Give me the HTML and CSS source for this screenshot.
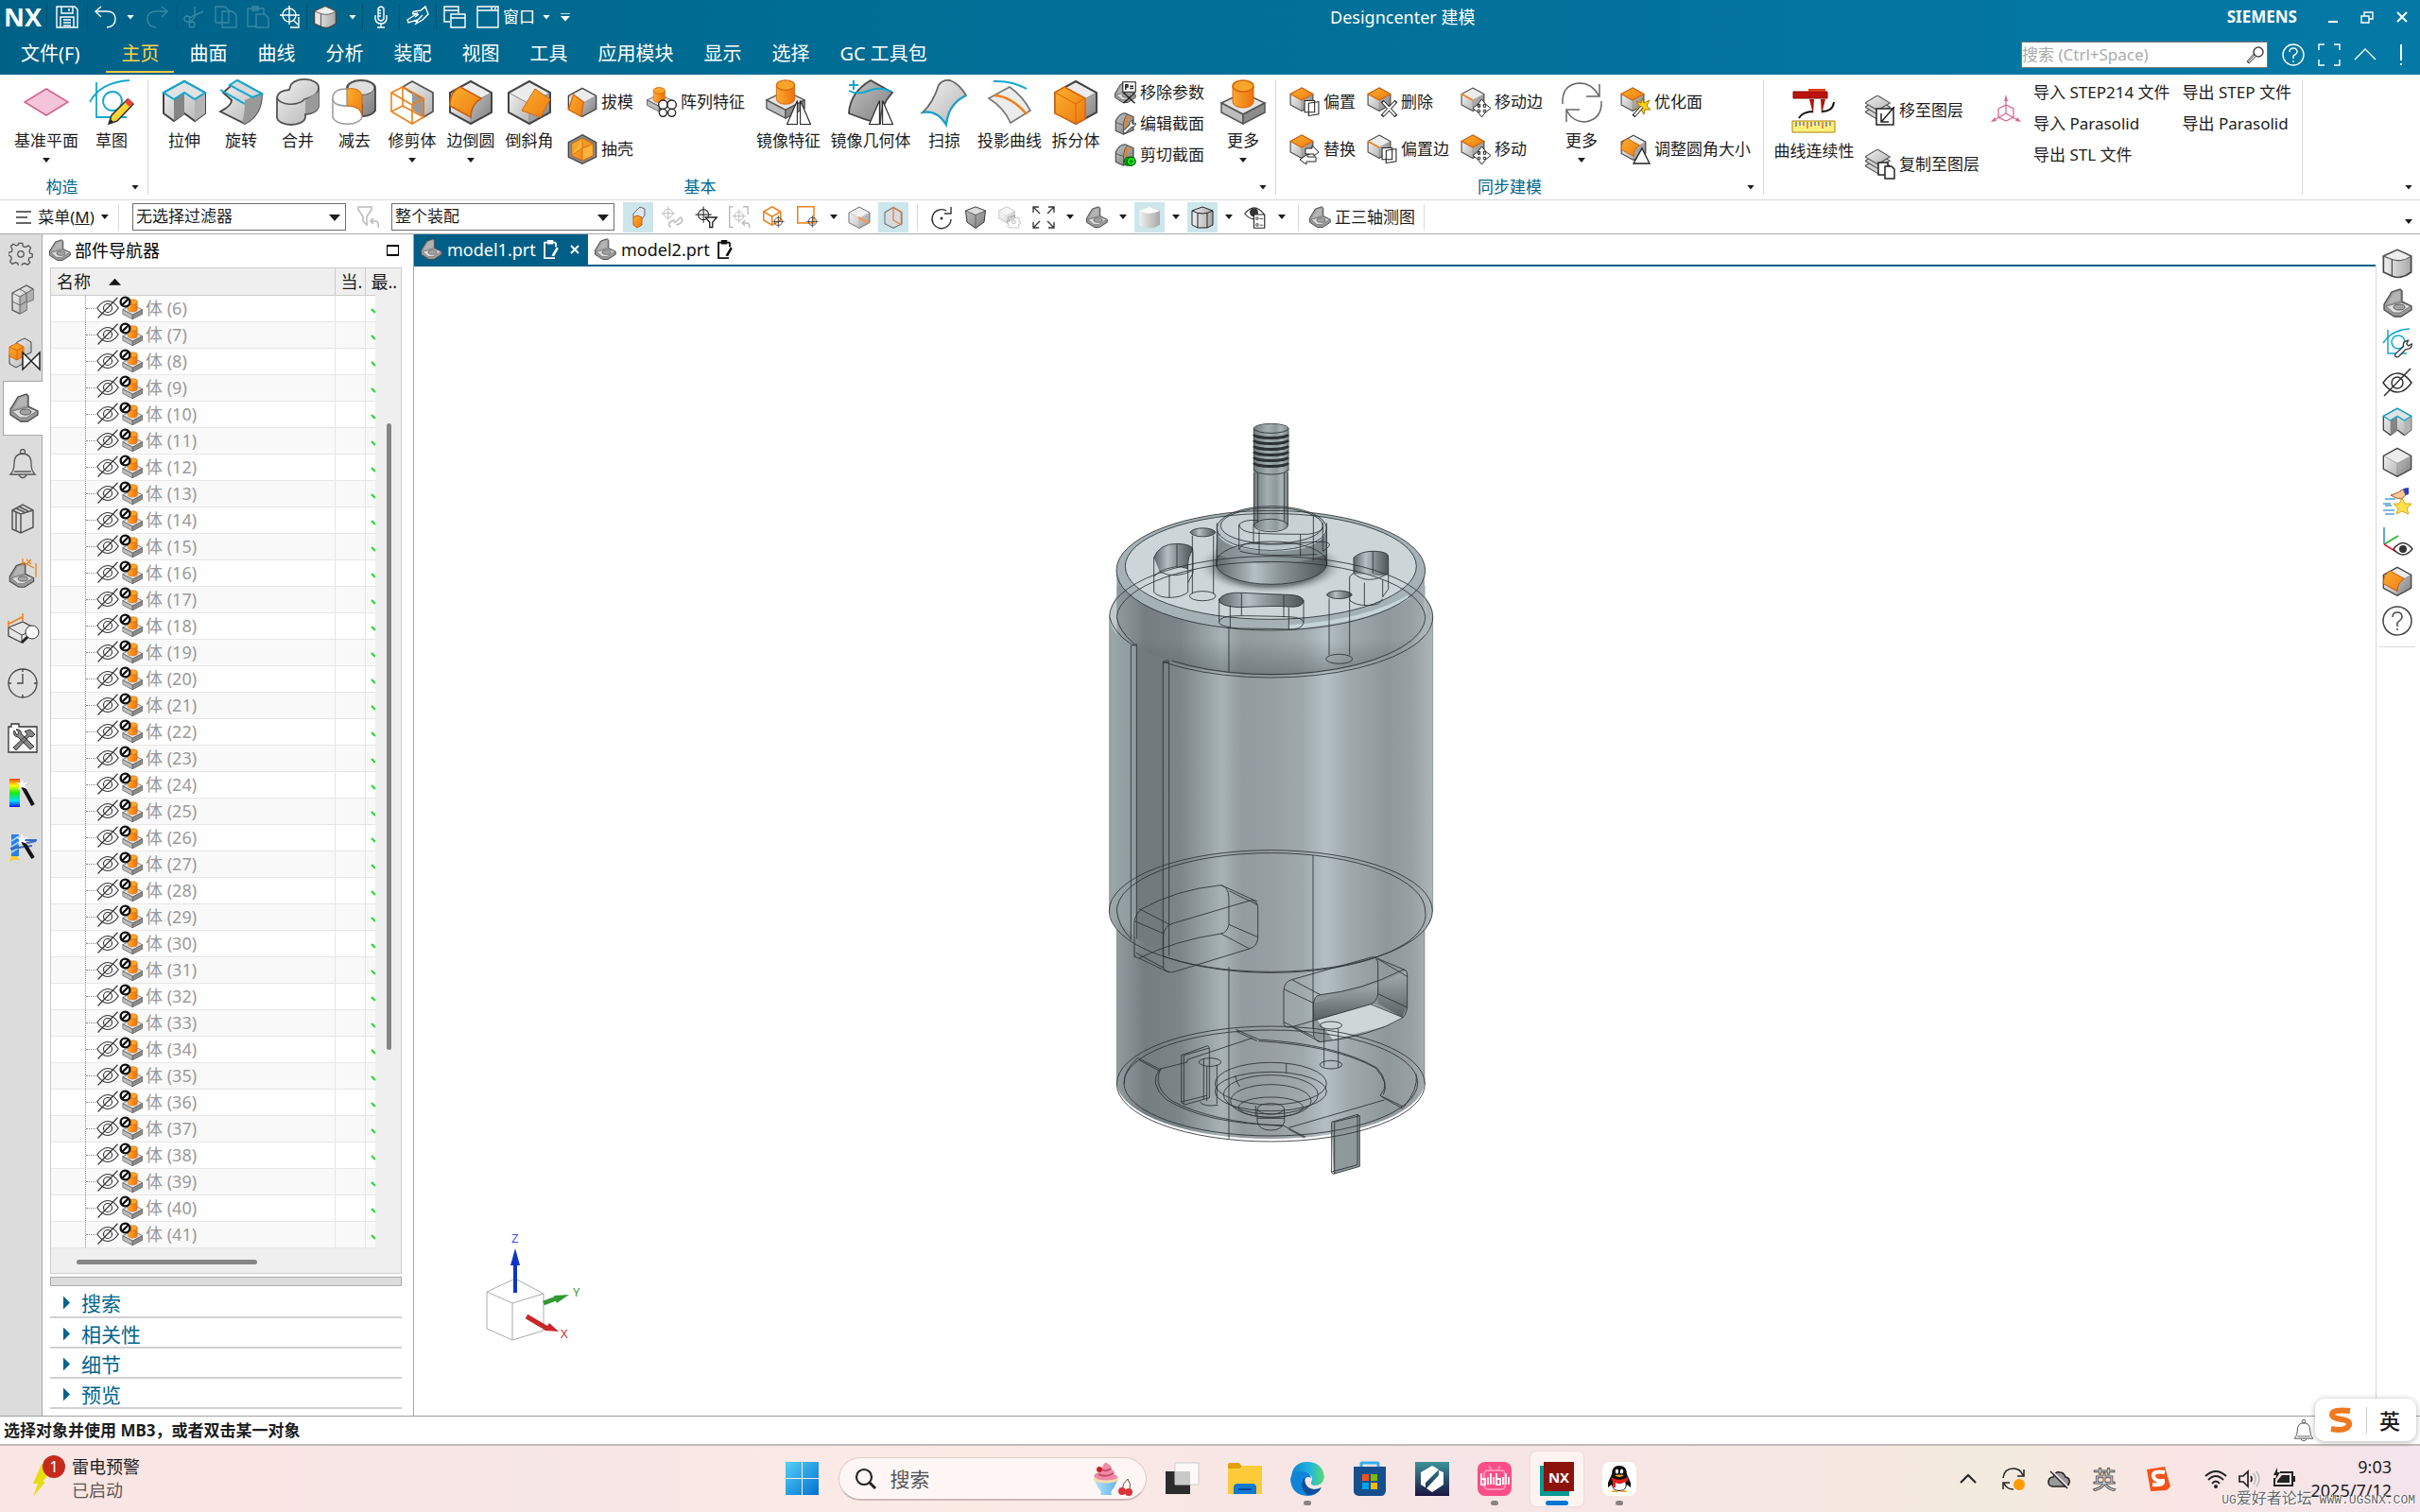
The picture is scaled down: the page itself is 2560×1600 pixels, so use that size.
FILE: index.html
```html
<!DOCTYPE html>
<html lang="zh-CN">
<head>
<meta charset="utf-8">
<meta name="viewport" content="width=device-width, initial-scale=1">
<title>Designcenter 建模</title>
<link rel="stylesheet" href="styles.css">
<script src="app.js" defer></script>
</head>
<body>
<svg class="defs" aria-hidden="true">
<defs>
<linearGradient id="gg" x1="0" y1="0" x2="1" y2="1"><stop offset="0" stop-color="#f2f2f2"/><stop offset="1" stop-color="#b4b4b4"/></linearGradient>
<linearGradient id="gd" x1="0" y1="0" x2="1" y2="1"><stop offset="0" stop-color="#c2c2c2"/><stop offset="1" stop-color="#7d7d7d"/></linearGradient>
<linearGradient id="go" x1="0" y1="0" x2="1" y2="1"><stop offset="0" stop-color="#fbb02e"/><stop offset="1" stop-color="#ee7a10"/></linearGradient>
<linearGradient id="gcyl"><stop offset="0" stop-color="#f0f0f0"/><stop offset="1" stop-color="#a8a8a8"/></linearGradient>
<linearGradient id="gocyl"><stop offset="0" stop-color="#fba832"/><stop offset="1" stop-color="#ec720c"/></linearGradient>
<linearGradient id="rainbow" x2="0" y2="1"><stop offset="0" stop-color="#f40"/><stop offset=".25" stop-color="#ff0"/><stop offset=".5" stop-color="#1e1"/><stop offset=".78" stop-color="#0df"/><stop offset="1" stop-color="#11f"/></linearGradient>
<linearGradient id="win" x2="1" y2="1"><stop offset="0" stop-color="#55d0f8"/><stop offset="1" stop-color="#0070d0"/></linearGradient>
<linearGradient id="edge" x2="1" y2="0"><stop offset="0" stop-color="#0a84d6"/><stop offset=".6" stop-color="#25b8d8"/><stop offset="1" stop-color="#5fdc6a"/></linearGradient>
<linearGradient id="pen" x2="0" y2="1"><stop offset="0" stop-color="#3b9399"/><stop offset="1" stop-color="#1b1442"/></linearGradient>
<linearGradient id="cup" x2="1" y2="0"><stop offset="0" stop-color="#b8e0f8"/><stop offset="1" stop-color="#5cb4ee"/></linearGradient>
</defs>
<symbol id="cube" viewBox="0 0 48 48"><path d="M24 2 46 14 24 26 2 14Z" fill="#ececec"/><path d="M2 14 24 26V47L2 35Z" fill="url(#gg)"/><path d="M46 14 24 26V47L46 35Z" fill="url(#gd)"/><path d="M2 14 24 26 46 14M24 26V47" fill="none" stroke="#8a8a8a"/><path d="M24 2 46 14V35L24 47 2 35V14Z" fill="none" stroke="#444" stroke-width="2"/></symbol>
<symbol id="ocube" viewBox="0 0 48 48"><use href="#cube"/><path d="M24 2 46 14 24 26 2 14Z" fill="url(#go)" stroke="#d9660a" stroke-width="2"/></symbol>
<symbol id="ecube" viewBox="0 0 48 48"><use href="#cube"/><path d="M2 14 24 26" stroke="#f08018" stroke-width="3"/></symbol>
<symbol id="feature" viewBox="0 0 48 48"><path d="M1 25 24 14 47 25 24 37Z" fill="#e4e4e4" stroke="#555" stroke-width="1.5"/><path d="M1 25 24 37V47L1 35Z" fill="#bdbdbd" stroke="#555" stroke-width="1.5"/><path d="M47 25 24 37V47L47 35Z" fill="#8c8c8c" stroke="#555" stroke-width="1.5"/><path d="M13 7V24A11 6 0 0 0 35 24V7Z" fill="url(#gocyl)" stroke="#d9660a"/><ellipse cx="24" cy="7" rx="11" ry="6" fill="#f9a52c" stroke="#d9660a" stroke-width="1.5"/></symbol>
<symbol id="bracket" viewBox="0 0 32 32"><path d="M2 23V17L10 4 19 1 21 3V14L31 19V23L20 30H13Z" fill="#9a9a9a" stroke="#4a4a4a" stroke-width="1.3"/><path d="M5 17 12 5 19 3V13Z" fill="#b4b4b4"/><path d="M4 19 20 15 30 19 19 26H12Z" fill="#dedede" stroke="#777"/><ellipse cx="18" cy="20" rx="6" ry="3" fill="#a4a4a4" stroke="#555"/></symbol>
<symbol id="eyeoff" viewBox="0 0 32 32"><g fill="none" stroke="#333" stroke-width="1.500"><path d="M1 16Q8 6 16 6T31 16Q24 26 16 26T1 16Z"/><circle cx="16" cy="16" r="6"/><path d="M2 30 30 1"/></g></symbol>
<symbol id="gear" viewBox="0 0 32 32"><path d="M13 3h5l1 4 3 1 4-2 3 3-2 4 1 3 3 1v4l-4 1-1 3 2 3-3 3-4-2-3 1-1 3h-4l-1-4-3-1-4 2-3-3 2-4-1-3-3-1v-4l4-1 1-3-2-4 3-3 4 2 3-1Z" fill="none" stroke="#555" stroke-width="1.600"/><circle cx="16" cy="17" r="4" fill="none" stroke="#555" stroke-width="1.600"/></symbol>
<symbol id="bell" viewBox="0 0 32 32"><g fill="none" stroke="#555" stroke-width="1.300"><path d="M3 27Q7 23 7 16Q7 5 16 5T25 16Q25 23 29 27ZM7 24H25M12 28Q16 33 20 28"/><circle cx="16" cy="3" r="2.500"/></g></symbol>
<symbol id="extrude" viewBox="0 0 48 48"><path d="M2 14V36L13 44 24 36 35 44 46 36V14L24 2Z" fill="url(#gg)" stroke="#444" stroke-width="2"/><path d="M13 21 24 14V37L13 44Z" fill="#858585"/><path d="M35 21 46 14V36L35 44Z" fill="#b4b4b4"/><path d="M2 14 24 2 46 14 35 21 24 14 13 21Z" fill="#e2e2e2" stroke="#12a8d0" stroke-width="2"/></symbol>
<symbol id="blend" viewBox="0 0 48 48"><use href="#cube"/><path d="M13 8Q3 12 2 25V28L24 40Q24 27 35 20Z" fill="url(#go)" stroke="#c85c0a" stroke-width="1.500"/></symbol>
<symbol id="target" viewBox="0 0 32 32"><g fill="none" stroke="currentColor" stroke-width="1.800"><circle cx="15" cy="15" r="9"/><path d="M15 1V29M1 15H29"/></g></symbol>
<symbol id="wrench" viewBox="0 0 32 32"><path d="M3 25 17 12Q15 5 21 3L25 2 22 8 25 11 31 8Q31 17 21 17L8 30Q1 31 3 25Z" fill="#fff" stroke="#333" stroke-width="2"/></symbol>
<symbol id="move" viewBox="0 0 32 32"><path d="M16 0 23 9H19V14H23V9L32 16 23 23V19H19V23H23L16 32 9 23H13V19H9V23L0 16 9 9V14H13V9H9Z" fill="#fff" stroke="#222" stroke-width="1.600"/></symbol>
<symbol id="sheets" viewBox="0 0 32 32"><path d="M2 1H22V24H2ZM10 6 30 3V28L10 31Z" fill="#fff" stroke="#222" stroke-width="2"/></symbol>
<symbol id="tris" viewBox="0 0 48 48"><path d="M21 1V47H1ZM27 1V47H47Z" fill="#fff" stroke="#222" stroke-width="2"/></symbol>
<symbol id="clip" viewBox="0 0 18 24"><path d="M15 4H2V22H14M15 4V9" fill="none" stroke="currentColor" stroke-width="2"/><path d="M5 1H12V6H5ZM10 19 16 9 18 11 13 20Z" fill="currentColor"/></symbol>
<symbol id="layers" viewBox="0 0 32 32"><g stroke="#555" stroke-width="1.300" fill="#d2d2d2"><path d="M0 20 15 11 30 20 15 29Z"/><path d="M0 14 15 5 30 14 15 23Z"/><path d="M0 9 15 0 30 9 15 18Z" fill="url(#gg)"/></g></symbol>
<symbol id="solid" viewBox="0 0 32 32"><path d="M3 9 16 3 29 9V24Q20 31 12 28L3 24Z" fill="url(#gcyl)" stroke="#444" stroke-width="1.500"/><path d="M3 9 16 3 29 9Q20 15 11 12Z" fill="#eee" stroke="#555"/><path d="M11 12V28" stroke="#444"/></symbol>
<symbol id="section" viewBox="0 0 32 32"><path d="M3 12Q8 1 16 1L28 6V25L14 31 3 26Z" fill="url(#gd)" stroke="#444" stroke-width="1.500"/><path d="M3 14 14 18V31M14 18Q15 5 20 3" fill="none" stroke="#444"/><path d="M20 5Q15 8 16 28L20 26V12Q20 8 25 6Z" fill="#f08018"/></symbol>
</svg>

<header class="app-header">
<div class="titlebar">
<div class="quick">
<span class="nx">NX</span><i class="sep"></i>
<button class="c42" aria-label="保存"><svg class="i24" viewBox="0 0 24 24"><path d="M1 1H20L23 4V23H1ZM6 1V8H18V1M14 3V6M5 23V12H19V23M8 15H16M8 18H16M8 21H16" class="wl"/></svg></button><i class="sep"></i>
<button class="c38" aria-label="撤消"><svg class="i24" viewBox="0 0 24 24"><path d="M7 1 1 6 7 12M1 6H13Q22 6 22 14T13 23" class="wl"/></svg></button><button class="c14" aria-label="撤消列表"><b class="caret"></b></button>
<button class="c42 dim" aria-label="重做"><svg class="i24" viewBox="0 0 24 24"><path d="M17 1 23 6 17 12M23 6H11Q2 6 2 14T11 23" class="wl"/></svg></button><i class="sep"></i>
<button class="c34 dim" aria-label="剪切"><svg class="i24" viewBox="0 0 24 24"><path d="M13 1V12L7 19M22 6 7 13" class="wl"/><circle cx="5" cy="14" r="3" class="wl"/><circle cx="10" cy="20" r="3" class="wl"/></svg></button>
<button class="c34 dim" aria-label="复制"><svg class="i24" viewBox="0 0 24 24"><path d="M1 1H11L15 5V18H1ZM8 6H19L23 10V23H8Z" class="wl"/></svg></button>
<button class="c34 dim" aria-label="粘贴"><svg class="i24" viewBox="0 0 24 24"><path d="M10 22H1V3H18V9M6 1H12V5H6ZM10 9H19L23 13V23H10Z" class="wl"/></svg></button>
<button class="c34" aria-label="命令查找器"><svg class="i24" viewBox="0 0 24 24"><path d="M11 0V20M1 10H22M21 12V23H12M15 15 20 20" class="wl"/><circle cx="11" cy="10" r="7" class="wl"/></svg></button><i class="sep"></i>
<button class="c38" aria-label="实体"><svg class="i28"><use href="#solid"/></svg></button><button class="c20" aria-label="实体列表"><b class="caret"></b></button><i class="sep"></i>
<button class="c38" aria-label="语音"><svg class="i24" viewBox="0 0 24 24"><path d="M9 3Q12-1 15 3V14Q12 18 9 14ZM9 5H12M9 8H12M9 11H12M6 10V14Q7 19 12 19T18 14V10M12 19V23M8 23H16" class="wl"/></svg></button><i class="sep"></i>
<button class="c38" aria-label="触控"><svg class="i24" viewBox="0 0 24 24"><path d="M1 15 12 8 7 9Q6 6 9 6L15 5 20 1 23 9 17 15 10 19 12 15 2 18ZM12 15 17 10M9 12 13 9" class="wl"/></svg></button><i class="sep"></i>
<button class="c38" aria-label="切换窗口"><svg class="i24" viewBox="0 0 24 24"><path d="M7 17H1V1H16V8M1 5H16M8 9H23V23H8ZM8 13H23" class="wl"/></svg></button>
<button class="winbtn"><svg class="i24" viewBox="0 0 24 24"><path d="M1 1H23V23H1ZM1 5H23M15 3H17M19 3H21" class="wl"/></svg>窗口<b class="caret"></b></button>
<button class="c24 over" aria-label="自定义"><b class="caret"></b></button>
</div>
<h1>Designcenter 建模</h1>
<div class="wintools"><strong>SIEMENS</strong>
<button aria-label="最小化"><svg class="i14" viewBox="0 0 14 14"><path d="M2 12H12" class="wl2"/></svg></button>
<button aria-label="还原"><svg class="i14" viewBox="0 0 14 14"><path d="M1 6H9V13H1ZM4 6V2H13V9H9" class="wl"/></svg></button>
<button aria-label="关闭"><svg class="i14" viewBox="0 0 14 14"><path d="M2 2 12 12M12 2 2 12" class="wl2"/></svg></button></div>
</div>
<nav class="menubar">
<a class="file" href="#file">文件(F)</a><a class="on" href="#home">主页</a><a href="#surface">曲面</a><a href="#curve">曲线</a><a href="#analysis">分析</a><a href="#assembly">装配</a><a href="#view">视图</a><a href="#tools">工具</a><a href="#apps">应用模块</a><a href="#display">显示</a><a href="#select">选择</a><a href="#gc">GC 工具包</a>
<div class="menuright">
<div class="findbox"><input type="search" placeholder="搜索 (Ctrl+Space)" aria-label="搜索"><svg class="i20" viewBox="0 0 20 20"><circle cx="13" cy="7" r="5" fill="none" stroke="#444" stroke-width="1.500"/><path d="M9 10 2 18M8 9 1 17 3 19 10 12" fill="none" stroke="#444"/></svg></div>
<button aria-label="帮助"><svg class="i24" viewBox="0 0 24 24"><circle cx="12" cy="12" r="11" class="wl"/><path d="M8 9Q8 5 12 5T16 9Q16 11 12 13V16M12 18V20" class="wl"/></svg></button>
<button aria-label="全屏"><svg class="i24" viewBox="0 0 24 24"><path d="M1 7V1H7M17 1H23V7M23 17V23H17M7 23H1V17" class="wl"/></svg></button>
<button aria-label="最小化功能区"><svg class="i24" viewBox="0 0 24 24"><path d="M1 17 12 6 23 17" class="wl"/></svg></button>
<button aria-label="通知"><svg class="i24" viewBox="0 0 24 24"><path d="M12 1V18M12 21V23" class="wl2"/></svg></button>
</div>
</nav>
</header>

<section class="ribbon">
<div class="group g1">
<div class="tools">
<button class="big w4"><svg class="i48" viewBox="0 0 48 48"><path d="M24 10 47 24 24 38 1 24Z" fill="#f4c4da" stroke="#d2628f" stroke-width="1.500"/></svg>基准平面<b class="caret"></b></button>
<button class="big w2"><svg class="i48" viewBox="0 0 48 48"><g fill="none" stroke="#12a8d0" stroke-width="1.800"><path d="M8 3V40H40M1 24Q12 3 43 1"/><circle cx="25" cy="23" r="10"/></g><path d="M21 47 24 38 41 21 47 26 30 44Z" fill="#fcd535" stroke="#333" stroke-width="1.500"/><path d="M38 24 42 20 47 25 43 29Z" fill="#e8453c"/><path d="M21 47 23 42 26 45Z" fill="#222"/></svg>草图</button>
</div>
<div class="gfoot"><span>构造</span><button aria-label="构造选项"><b class="caret"></b></button></div>
</div>
<div class="group g2">
<div class="tools">
<button class="big w2"><svg class="i48"><use href="#extrude"/></svg>拉伸</button>
<button class="big w2"><svg class="i48" viewBox="0 0 48 48"><path d="M20 1 46 15Q46 38 28 47L2 34Q14 28 14 22L5 14Z" fill="url(#gg)" stroke="#444" stroke-width="1.800"/><path d="M28 22Q28 38 25 45L28 47Q46 38 46 15L37 18Z" fill="#999"/><path d="M20 1 46 15 36 19 12 6ZM2 11 28 26" fill="#dadada" stroke="#12a8d0" stroke-width="2"/></svg>旋转</button>
<button class="big w2"><svg class="i48" viewBox="0 0 48 48"><path d="M16 8A14 8 0 0 1 46 9V29Q44 36 32 37V40A15 8 0 0 1 2 40V19Q3 12 15 11Z" fill="url(#gg)" stroke="#555" stroke-width="1.800"/><path d="M2 19A15 8 0 0 0 31 21Q46 17 46 9" fill="none" stroke="#555" stroke-width="1.500"/><path d="M32 22V36Q44 36 46 29V13Z" fill="#9a9a9a"/></svg>合并</button>
<button class="big w2"><svg class="i48" viewBox="0 0 48 48"><path d="M16 9A15 8 0 0 1 46 9V33Q42 39 32 39V27L16 20Z" fill="url(#gd)" stroke="#444" stroke-width="1.800"/><ellipse cx="31" cy="9" rx="14" ry="7.500" fill="#dedede" stroke="#555"/><path d="M1 19V39A15 8 0 0 0 32 39Q31 28 16 28Q2 27 1 19Z" fill="#fff" stroke="#999" stroke-width="1.500"/><path d="M16 10Q28 8 32 16V38Q31 28 16 28Z" fill="url(#go)" stroke="#d9660a"/><path d="M16 10Q2 10 1 19T16 28Z" fill="#fff" stroke="#999" stroke-width="1.500"/></svg>减去</button>
<button class="big w3"><svg class="i48" viewBox="0 0 48 48"><path d="M24 2 46 14V34L36 40V22L14 8Z" fill="url(#gg)" stroke="#555" stroke-width="1.800"/><path d="M24 14 36 22V40L24 32Z" fill="#999"/><path d="M2 14 14 8 36 20 24 27ZM2 14V34L24 47V27M14 8V28L2 34M14 28 36 40 24 47M36 20V40" fill="none" stroke="#f08018" stroke-width="1.600"/></svg>修剪体<b class="caret"></b></button>
<button class="big w3"><svg class="i48"><use href="#blend"/></svg>边倒圆<b class="caret"></b></button>
<button class="big w3"><svg class="i48" viewBox="0 0 48 48"><use href="#cube"/><path d="M30 10 46 21 36 40 16 33Z" fill="url(#go)" stroke="#d9660a"/></svg>倒斜角</button>
<div class="pair">
<button class="small"><svg class="i32" viewBox="0 0 48 48"><use href="#cube"/><path d="M10 12 26 24 22 47 2 36Z" fill="url(#go)" stroke="#d9660a" stroke-width="2"/></svg>拔模</button>
<button class="small"><svg class="i32" viewBox="0 0 48 48"><path d="M24 1 46 13V36L24 47 2 36V13Z" fill="#888" stroke="#444" stroke-width="2"/><path d="M24 6 41 15V34L24 42 7 34V15Z" fill="url(#go)" stroke="#b4500a"/><path d="M24 6V22L7 34M24 22Q34 20 41 15V34L24 42Z" fill="#ffb33a" stroke="#c85c0a"/></svg>抽壳</button>
</div>
<div class="pair">
<button class="small"><svg class="i32" viewBox="0 0 48 48"><use href="#feature" width="40" height="40"/><g fill="#fff" stroke="#222" stroke-width="2"><circle cx="26" cy="28" r="7"/><circle cx="40" cy="28" r="7"/><circle cx="26" cy="41" r="6"/><circle cx="40" cy="41" r="6"/></g></svg>阵列特征</button>
</div>
<button class="big w4"><svg class="i48" viewBox="0 0 48 48"><use href="#feature" width="42" height="42"/><use href="#tris" x="22" y="22" width="26" height="26"/></svg>镜像特征</button>
<button class="big w5"><svg class="i48" viewBox="0 0 48 48"><path d="M24 1 47 14Q34 28 34 47Q18 43 1 36Q2 14 24 1Z" fill="url(#gd)" stroke="#444" stroke-width="1.800"/><path d="M6 1V11M1 6H11M1 12Q10 17 22 12T46 13" fill="none" stroke="#12a8d0" stroke-width="2"/><use href="#tris" x="22" y="22" width="26" height="26"/></svg>镜像几何体</button>
<button class="big w2"><svg class="i48" viewBox="0 0 48 48"><path d="M1 35Q12 25 18 6Q22 0 30 1Q40 5 47 17Q28 26 26 48Q16 32 1 35Z" fill="url(#gg)" stroke="#666" stroke-width="1.800"/><path d="M1 35Q16 32 26 48Q28 26 47 17" fill="none" stroke="#12a8d0" stroke-width="2"/></svg>扫掠</button>
<button class="big w4"><svg class="i48" viewBox="0 0 48 48"><path d="M24 8Q38 18 46 33L25 46Q18 30 2 20Z" fill="#ececec" stroke="#777" stroke-width="1.600"/><path d="M8 17Q26 18 42 37" fill="none" stroke="#f08018" stroke-width="2.500"/><path d="M7 2Q26 1 42 10" fill="none" stroke="#12a8d0" stroke-width="2"/></svg>投影曲线</button>
<button class="big w3"><svg class="i48" viewBox="0 0 48 48"><use href="#cube"/><path d="M12 8 34 20V42L24 47 2 36V14Z" fill="url(#go)" stroke="#d9660a" stroke-width="1.500"/><path d="M2 14 24 26 34 20M24 26V47" fill="none" stroke="#d9660a"/></svg>拆分体</button>
<div class="trio">
<button class="small"><svg class="i24" viewBox="0 0 32 32"><use href="#bracket"/><path d="M13 1H31V15H13Z" fill="#fff" stroke="#222" stroke-width="1.500"/><path d="M17 12V5H20V8H17M23 7H28M23 10H28M14 16 30 31M30 16 14 31" fill="none" stroke="#222" stroke-width="2"/></svg>移除参数</button>
<button class="small"><svg class="i24" viewBox="0 0 32 32"><use href="#section"/><use href="#wrench" x="12" y="10" width="20" height="20"/></svg>编辑截面</button>
<button class="small"><svg class="i24" viewBox="0 0 32 32"><use href="#section"/><path d="M18 19H26V31H18Q12 25 18 19Z" fill="#0a0" stroke="#040"/><circle cx="25" cy="25" r="6" fill="#12e21e" stroke="#040" stroke-width="1.500"/><circle cx="25" cy="25" r="2.500" fill="#088a10"/></svg>剪切截面</button>
</div>
<button class="big w2"><svg class="i48"><use href="#feature"/></svg>更多<b class="caret"></b></button>
</div>
<div class="gfoot"><span>基本</span><button aria-label="基本选项"><b class="caret"></b></button></div>
</div>
<div class="group g3">
<div class="tools">
<div class="pair">
<button class="small"><svg class="i32" viewBox="0 0 32 32"><use href="#ocube" width="26" height="26"/><use href="#sheets" x="15" y="13" width="17" height="19"/></svg>偏置</button>
<button class="small"><svg class="i32" viewBox="0 0 32 32"><use href="#ocube" width="26" height="26"/><path d="M17 15H24V12L31 19 26 23V21H17ZM28 24H19V21L11 27 18 32V29H28Z" fill="#fff" stroke="#222"/></svg>替换</button>
</div>
<div class="pair">
<button class="small"><svg class="i32" viewBox="0 0 32 32"><use href="#ocube" width="26" height="26"/><path d="M16 15 31 31M31 15 16 31" stroke="#222" stroke-width="4"/><path d="M17 16 30 30M30 16 17 30" stroke="#fff" stroke-width="2"/></svg>删除</button>
<button class="small"><svg class="i32" viewBox="0 0 32 32"><use href="#ecube" width="26" height="26"/><use href="#sheets" x="15" y="13" width="17" height="19"/></svg>偏置边</button>
</div>
<div class="pair">
<button class="small"><svg class="i32" viewBox="0 0 32 32"><use href="#ecube" width="26" height="26"/><use href="#move" x="13" y="13" width="19" height="19"/></svg>移动边</button>
<button class="small"><svg class="i32" viewBox="0 0 32 32"><use href="#ocube" width="26" height="26"/><use href="#move" x="13" y="13" width="19" height="19"/></svg>移动</button>
</div>
<button class="big w2"><svg class="i48" viewBox="0 0 48 48"><path d="M4 26Q3 5 22 4Q35 4 42 17M43 5V18H29M45 23Q46 42 28 45Q14 45 8 32M8 45V32H22" fill="none" stroke="#666" stroke-width="1.500"/></svg>更多<b class="caret"></b></button>
<div class="pair">
<button class="small"><svg class="i32" viewBox="0 0 32 32"><use href="#ocube" width="26" height="26"/><path d="M23 12 25 17 31 14 28 20 32 24 26 24 25 29 22 24 16 24 20 20 17 15 22 17Z" fill="#fcd010" stroke="#a8780a"/><path d="M14 31 23 21" stroke="#222" stroke-width="4"/><path d="M15 30 23 21" stroke="#fff" stroke-width="2"/></svg>优化面</button>
<button class="small"><svg class="i32" viewBox="0 0 32 32"><use href="#blend" width="28" height="28"/><path d="M23 15 31 31H14Z" fill="#fff" stroke="#222" stroke-width="1.300"/></svg>调整圆角大小</button>
</div>
</div>
<div class="gfoot"><span>同步建模</span><button aria-label="同步建模选项"><b class="caret"></b></button></div>
</div>
<div class="group g4">
<div class="tools">
<button class="big tall"><svg class="gauge" viewBox="0 0 48 48"><path d="M2 3H38V10H2Z" fill="#c0120c" stroke="#7a0804"/><path d="M18 0H36V3H18Z" fill="#e04010"/><path d="M19 11H24L23 27ZM31 11H36L32 27Z" fill="#b5120c"/><path d="M8 31Q12 24 23 24M32 24Q44 24 45 14" fill="none" stroke="#111" stroke-width="2"/><path d="M1 34H46V46H1Z" fill="#fdf07a" stroke="#a8820a"/><path d="M5 35V40M9 35V39M13 35V39M21 35V40M25 35V39M29 35V39M37 35V40M41 35V39" stroke="#33c"/><path d="M17 35V42M33 35V42" stroke="#d22"/></svg>曲线连续性</button>
<div class="pair wide">
<button class="small"><svg class="i32" viewBox="0 0 32 32"><use href="#layers" width="28" height="28"/><path d="M12 14H30V31H12Z" fill="#fff" stroke="#222" stroke-width="1.500"/><path d="M31 12 18 27M17 19V28H25" fill="none" stroke="#222" stroke-width="1.500"/></svg>移至图层</button>
<button class="small"><svg class="i32" viewBox="0 0 32 32"><use href="#layers" width="28" height="28"/><path d="M14 14H24V27H14Z" fill="#fff" stroke="#222" stroke-width="1.500"/><path d="M21 18H28L31 21V31H21Z" fill="#fff" stroke="#222" stroke-width="1.500"/></svg>复制至图层</button>
</div>
<button class="csys" aria-label="基准坐标系"><svg class="i32" viewBox="0 0 32 32"><path d="M16 3V20M16 20 2 28M16 20 30 28M8 15 16 11 24 15V24L16 28 8 24Z" fill="none" stroke="#d76a92" stroke-width="1.300"/><path d="M16 0 18 7H14ZM0 29 4 24 6 28ZM32 29 26 28 28 24Z" fill="#d76a92"/></svg></button>
<div class="trio text"><button>导入 STEP214 文件</button><button>导入 Parasolid</button><button>导出 STL 文件</button></div>
<div class="trio text"><button>导出 STEP 文件</button><button>导出 Parasolid</button></div>
</div>
</div>
<div class="ribbonend"><button aria-label="功能区选项"><b class="caret"></b></button></div>
</section>

<section class="selbar">
<button class="menubtn"><svg class="i16" viewBox="0 0 16 16"><path d="M0 2H16M0 8H12M0 14H16" stroke="#333" stroke-width="1.300"/></svg><span>菜单(<u>M</u>)</span><b class="caret"></b></button><i class="sep"></i>
<div class="combo a"><select aria-label="选择过滤器"><option>无选择过滤器</option></select><b class="caret lg"></b></div>
<button class="funnel" aria-label="重置过滤器"><svg class="i24" viewBox="0 0 24 24"><path d="M1 1H15V4L10 11V20L6 16V11L1 4ZM14 16H20Q23 17 22 23M17 13 14 16 17 19" fill="none" stroke="#b9b9b9" stroke-width="1.500"/></svg></button>
<div class="combo b"><select aria-label="选择范围"><option>整个装配</option></select><b class="caret lg"></b></div>
<div class="strip">
<button class="t on" aria-label="在部件内"><svg class="i24" viewBox="0 0 24 24"><path d="M7 8 14 1 19 3V10L15 15 7 12Z" fill="#dfe6e8" stroke="#667"/><path d="M7 12 11 10 16 12V20L11 23 7 20Z" fill="url(#go)" stroke="#c85c0a"/></svg></button>
<button class="t faint" aria-label="链接"><svg class="i24" viewBox="0 0 32 32"><use href="#target" width="22" height="22"/><path d="M14 30Q9 25 14 22L20 20M19 24 28 16Q33 20 28 24L22 27" fill="none" stroke="currentColor" stroke-width="2"/></svg></button>
<button class="t" aria-label="选择过滤"><svg class="i24" viewBox="0 0 32 32"><use href="#target" width="26" height="26"/><path d="M15 16H31L25 23V30H21V23Z" fill="#fff" stroke="#222" stroke-width="1.800"/></svg></button>
<button class="t faint" aria-label="重置选择"><svg class="i24" viewBox="0 0 32 32"><use href="#target" x="4" y="4" width="22" height="22"/><path d="M6 1H1V30H6M20 1H27V12M20 24H26Q31 26 28 31M23 20 19 24 23 28" fill="none" stroke="currentColor" stroke-width="1.800"/></svg></button>
<button class="t" aria-label="全选"><svg class="i24" viewBox="0 0 32 32"><path d="M13 1 25 8V20L13 27 1 20V8ZM1 8 13 15 25 8M13 15V27" fill="none" stroke="#f08018" stroke-width="2"/><use href="#target" x="13" y="13" width="19" height="19"/></svg></button>
<button class="t" aria-label="矩形选择"><svg class="i24" viewBox="0 0 32 32"><path d="M1 1H24V24H1Z" fill="none" stroke="#f08018" stroke-width="2"/><use href="#target" x="13" y="13" width="19" height="19"/></svg></button><button class="c18" aria-label="选择方式"><b class="caret"></b></button>
<button class="t" aria-label="高亮边"><svg class="i24" viewBox="0 0 48 48" opacity=".75"><use href="#cube"/><path d="M22 24 44 36" stroke="#f07810" stroke-width="4"/></svg></button>
<button class="t on" aria-label="高亮隐藏边"><svg class="i24" viewBox="0 0 32 32"><path d="M4 9 16 2 28 9V25L16 31 4 25Z" fill="#d5dcde" stroke="#777" stroke-width="1.500"/><path d="M16 2V20L28 27M16 2 27 8V24" fill="none" stroke="#e8702a" stroke-width="1.500"/></svg></button>
<i class="sep"></i>
<button class="t" aria-label="旋转视图"><svg class="i24" viewBox="0 0 24 24"><path d="M17 5A10 10 0 1 0 22 14M22 1V8H15" fill="none" stroke="#333" stroke-width="1.400"/><circle cx="12" cy="13" r="1.500" fill="#333"/></svg></button>
<button class="t" aria-label="定向视图"><svg class="i24" viewBox="0 0 48 48"><path d="M24 2 45 10 42 34 24 47 6 34 3 10Z" fill="url(#gd)" stroke="#333" stroke-width="2"/><path d="M3 10 24 2 45 10 24 19Z" fill="#ddd" stroke="#444" stroke-width="1.500"/><path d="M24 19V47" stroke="#555" stroke-width="1.500"/></svg></button>
<button class="t faint" aria-label="视图设置"><svg class="i24" viewBox="0 0 32 32"><use href="#cube" width="24" height="24" opacity=".4"/><use href="#gear" x="12" y="12" width="20" height="20" opacity=".5"/></svg></button>
<button class="t" aria-label="适合窗口"><svg class="i24" viewBox="0 0 24 24"><path d="M1 7V1H7M1 1 8 8M17 1H23V7M23 1 16 8M23 17V23H17M23 23 16 16M7 23H1V17M1 23 8 16" fill="none" stroke="#333" stroke-width="1.300"/></svg></button><button class="c20" aria-label="适合列表"><b class="caret"></b></button>
<button class="t" aria-label="部件显示"><svg class="i24"><use href="#bracket"/></svg></button><button class="c20" aria-label="部件列表"><b class="caret"></b></button>
<button class="t on" aria-label="着色"><svg class="i24" viewBox="0 0 24 24"><path d="M1 5 12 1 23 5V20Q12 27 1 20Z" fill="url(#gcyl)"/><path d="M1 5 12 1 23 5Q12 11 1 5Z" fill="#fafafa"/></svg></button><button class="c20" aria-label="着色列表"><b class="caret"></b></button>
<button class="t on" aria-label="带边着色"><svg class="i24" viewBox="0 0 24 24"><path d="M1 5 12 1 23 5V20L17 23H7L1 20Z" fill="url(#gcyl)" stroke="#222"/><path d="M1 5Q12 11 23 5M7 7V23M17 7V23" fill="none" stroke="#222"/></svg></button><button class="c20" aria-label="边列表"><b class="caret"></b></button>
<button class="t" aria-label="显示和隐藏"><svg class="i24" viewBox="0 0 32 32"><path d="M1 11Q14-6 28 11Q14 26 1 11Z" fill="#fff" stroke="#333" stroke-width="1.500"/><circle cx="14" cy="9" r="6" fill="#333"/><path d="M14 12H29V31H14Z" fill="#fff" stroke="#222" stroke-width="1.500"/><path d="M17 16H20V19H17ZM22 18H27M17 25H20V28H17ZM22 27H27" fill="none" stroke="#222"/></svg></button><button class="c20" aria-label="显示列表"><b class="caret"></b></button>
<i class="sep"></i>
<button class="iso"><svg class="i24"><use href="#bracket"/></svg>正三轴测图</button><i class="sep"></i>
</div>
<button class="c24 end" aria-label="选择条选项"><b class="caret"></b></button>
</section>

<main class="main">
<aside class="rail">
<button class="first" aria-label="设置"><svg class="i26"><use href="#gear"/></svg></button>
<button aria-label="装配导航器"><svg class="i32" viewBox="0 0 32 32"><path d="M5 9 20 1 27 5V16L20 19V27L13 31 5 27Z" fill="url(#gg)" stroke="#555" stroke-width="1.300"/><path d="M13 13 20 9 27 5V16L20 19V27L13 31Z" fill="#b0b0b0"/><path d="M5 9 13 13 27 5M13 13V31M13 5 20 9V19M5 18 13 22 20 18" fill="none" stroke="#666"/></svg></button>
<button aria-label="约束导航器"><svg class="i36" viewBox="0 0 36 36"><path d="M12 5 20 1 27 5V16L18 20V28L11 32 4 28V18Z" fill="url(#gg)" stroke="#444"/><path d="M4 10 12 6 19 10V20L12 24 4 20Z" fill="url(#go)" stroke="#d9660a"/><path d="M4 10 12 14 19 10M12 14V24" stroke="#d9660a" fill="none"/><path d="M18 16 36 34V16L18 34Z" fill="#fff" stroke="#222" stroke-width="1.500"/></svg></button>
<button class="on" aria-label="部件导航器"><svg class="i32"><use href="#bracket"/></svg></button>
<button aria-label="通知"><svg class="i32"><use href="#bell"/></svg></button>
<button aria-label="重用库"><svg class="i32" viewBox="0 0 32 32"><path d="M5 7 16 1 27 7V25L14 31 5 27ZM5 7 14 11 27 7M14 11V31M9 5 18 9M12 3 22 8M9 9V29" fill="none" stroke="#555" stroke-width="1.500"/></svg></button>
<button aria-label="参数"><svg class="i32" viewBox="0 0 32 32"><use href="#bracket" y="4" width="29" height="28"/><path d="M16 0V8M30 5V20M17 4 28 10M20 1 25 6M25 1 20 6" stroke="#f08018" stroke-width="1.300"/></svg></button>
<button aria-label="测量"><svg class="i32" viewBox="0 0 32 32"><path d="M1 15 16 9 31 17 15 31 1 24Z" fill="#e6e6e6" stroke="#444" stroke-width="1.300"/><path d="M1 15 15 23 31 17M15 23V31" fill="none" stroke="#444"/><path d="M1 15V8M16 9V0M2 11 15 4" stroke="#f08018" stroke-width="1.500"/><circle cx="26" cy="20" r="7" fill="#fff" stroke="#333"/><path d="M21 25 15 31" stroke="#222" stroke-width="3"/></svg></button>
<button aria-label="历史记录"><svg class="i32" viewBox="0 0 32 32"><circle cx="16" cy="16" r="15" fill="#e0e0e0" stroke="#444" stroke-width="1.300"/><path d="M16 6V16H10M16 1V4M16 28V31M1 16H4M28 16H31" fill="none" stroke="#444" stroke-width="1.300"/></svg></button>
<button aria-label="工具"><svg class="i32" viewBox="0 0 32 32"><path d="M1 4H4V1H12V4H31V31H1Z" fill="#fff" stroke="#333" stroke-width="1.300"/><path d="M7 8Q5 14 11 15L24 28 28 25 15 12Q14 6 9 7L12 10 10 13ZM26 15 29 12 24 7 18 9 21 12 6 26 9 29 23 14Z" fill="#888" stroke="#333"/></svg></button>
<button aria-label="颜色向导"><svg class="i32" viewBox="0 0 32 32"><path d="M2 1H13V31H2Z" fill="url(#rainbow)"/><path d="M16 9 27 29" stroke="#111" stroke-width="4"/><path d="M15 1 17 6 22 4 18 8 21 12 15 10 11 13 13 8 9 5 14 6Z" fill="#fff"/></svg></button>
<button aria-label="加工向导"><svg class="i32" viewBox="0 0 32 32"><path d="M2 31 4 25 0 23 7 24 12 23 10 26 14 30 8 28Z" fill="#fc2"/><path d="M4 2H12V25H4Z" fill="#2b7fe0"/><path d="M4 9 12 4M4 15 12 10M4 21 12 16" stroke="#9fd0ff" stroke-width="2"/><path d="M14 8H31M16 12 30 9M3 17 26 14" stroke="#3a6bc0" stroke-width="2"/><path d="M16 9 27 27" stroke="#111" stroke-width="4"/><path d="M15 1 17 6 22 4 18 8 21 12 15 10 11 13 13 8 9 5 14 6Z" fill="#fff"/></svg></button>
</aside>

<section class="nav">
<h2><svg class="i24"><use href="#bracket"/></svg>部件导航器<button aria-label="浮动"><i class="square"></i></button></h2>
<div class="tree">
<table>
<colgroup><col><col class="k1"><col class="k2"></colgroup>
<thead><tr><th>名称<b class="sortup"></b></th><th>当.</th><th>最..</th></tr></thead>
<tbody id="bodies"></tbody>
</table>
<div class="vbar"><i></i></div>
<div class="hbar"><i></i></div>
</div>
<div class="splitter"></div>
<button class="acc"><b></b>搜索</button>
<button class="acc"><b></b>相关性</button>
<button class="acc"><b></b>细节</button>
<button class="acc"><b></b>预览</button>
</section>

<section class="work">
<div class="tabs">
<a class="tab on" href="#model1"><svg class="i24"><use href="#bracket"/></svg>model1.prt<svg class="iclip"><use href="#clip"/></svg><svg class="i10" viewBox="0 0 10 10"><path d="M1 1 9 9M9 1 1 9" stroke="#fff" stroke-width="2"/></svg></a>
<a class="tab" href="#model2"><svg class="i24"><use href="#bracket"/></svg>model2.prt<svg class="iclip"><use href="#clip"/></svg></a>
</div>
<div class="canvas">
<svg class="motor" viewBox="0 0 1260 2520" role="img" aria-label="电机模型">
<defs>
<linearGradient id="body" gradientUnits="userSpaceOnUse" x1="130" x2="1157"><stop offset="0" stop-color="#a3adaf"/><stop offset=".03" stop-color="#8e999b"/><stop offset=".08" stop-color="#7f898c"/><stop offset=".11" stop-color="#747e80"/><stop offset=".22" stop-color="#7c8688"/><stop offset=".3" stop-color="#97a2a4"/><stop offset=".35" stop-color="#a7b3b5"/><stop offset=".41" stop-color="#929b9e"/><stop offset=".5" stop-color="#989fa3"/><stop offset=".6" stop-color="#9faaac"/><stop offset=".67" stop-color="#b3bfc2"/><stop offset=".74" stop-color="#a0aaad"/><stop offset=".86" stop-color="#8e989a"/><stop offset=".93" stop-color="#989fa3"/><stop offset="1" stop-color="#abb5b7"/></linearGradient>
<linearGradient id="shaft" x2="1" y2="0"><stop offset="0" stop-color="#717c7e"/><stop offset=".4" stop-color="#a3aeb0"/><stop offset=".65" stop-color="#8e999b"/><stop offset=".8" stop-color="#aab4b6"/><stop offset="1" stop-color="#7e888a"/></linearGradient>
<linearGradient id="hole" x2="1" y2="0"><stop offset="0" stop-color="#5d6668"/><stop offset=".35" stop-color="#b4c0c3"/><stop offset=".6" stop-color="#879193"/><stop offset="1" stop-color="#4d5557"/></linearGradient>
<linearGradient id="pocket" x2="0" y2="1"><stop offset="0" stop-color="#a3adaf"/><stop offset="1" stop-color="#596163"/></linearGradient>
<radialGradient id="glow" cx=".5" cy=".5" r=".5"><stop offset=".72" stop-color="#5d6769"/><stop offset="1" stop-color="#ccd5d8" stop-opacity="0"/></radialGradient>
<linearGradient id="shade" x2="0" y2="1"><stop offset=".6" stop-color="#4a5456" stop-opacity="0"/><stop offset="1" stop-color="#4a5456" stop-opacity=".45"/></linearGradient>
</defs>
<path d="M154 550V2180A489 184 0 0 0 1131 2180V550Z" fill="url(#body)"/>
<path d="M131 697A513 193 0 0 0 1157 697V1632A513 193 0 0 1 131 1632Z" fill="url(#body)"/>
<path d="M131 697Q134 660 156 628V705Q165 750 218 790V1720L131 1640Z" fill="#9aa6a8" fill-opacity=".6"/>
<path d="M218 785 302 835V1770L218 1720Z" fill="#717b7d"/>
<path d="M154 600V700A489 184 0 0 0 1133 700V600Z" fill="url(#body)"/>
<path d="M154 600V700A489 184 0 0 0 1133 700V600Z" fill="url(#shade)"/>
<path d="M1133 635Q1157 665 1157 697Q1156 745 1090 790Q1133 745 1133 697Z" fill="#a9b4b6"/>
<ellipse cx="643" cy="551" rx="490" ry="190" fill="#a5b2b5"/>
<path d="M700 730Q950 712 1080 635" fill="none" stroke="#dcecf0" stroke-width="12" opacity=".6"/>
<ellipse cx="643" cy="538" rx="462" ry="168" fill="#ccd5d8"/>
<ellipse cx="643" cy="535" rx="235" ry="92" fill="url(#glow)" opacity=".8"/>
<path d="M468 525A176 70 0 0 0 822 525V430H472Z" fill="url(#hole)"/>
<path d="M472 415V500Q643 560 820 500V415Z" fill="#8a9698" fill-opacity=".7"/>
<ellipse cx="646" cy="417" rx="174" ry="70" fill="#b7c3c6"/>
<ellipse cx="646" cy="409" rx="162" ry="57" fill="#c8d1d4"/>
<path d="M480 440Q510 484 646 486T815 430" fill="none" stroke="#dcecf0" stroke-width="7" opacity=".7"/>
<path d="M589 100V408A55 19 0 0 0 698 408V100A55 16 0 0 0 589 100Z" fill="url(#shaft)"/>
<path d="M387 430A41 16 0 0 1 468 430A41 16 0 0 1 387 430Z" fill="url(#hole)"/>
<path d="M820 628A41 15 0 0 1 901 628A41 15 0 0 1 820 628Z" fill="url(#hole)"/>
<path d="M272 510Q290 466 345 466Q396 468 396 486Q378 505 380 545Q340 530 290 555Z" fill="url(#hole)"/>
<path d="M906 510Q930 488 975 490T1016 512V560Q990 575 950 562Q930 565 906 560Z" fill="url(#hole)"/>
<path d="M478 645Q490 618 555 622T700 628Q747 630 747 650Q740 670 700 666T540 668Q480 664 478 645Z" fill="url(#hole)"/>
<g class="edge">
<ellipse cx="643" cy="551" rx="490" ry="190"/><ellipse cx="643" cy="538" rx="462" ry="168"/>
<ellipse cx="646" cy="417" rx="174" ry="70"/><ellipse cx="646" cy="409" rx="162" ry="57"/>
<ellipse cx="645" cy="527" rx="177" ry="68"/><ellipse cx="643" cy="408" rx="54" ry="20"/>
<path d="M472 400V540M820 400V535M479 640V715M747 645V715M542 405V485M778 375V520M606 425V500M737 435V505M808 400V490M588 405V465M542 405Q560 388 600 392M542 405Q545 430 600 433T760 436Q800 432 808 415M542 485Q548 460 600 466T760 462T808 490M545 490Q580 500 640 502T790 500"/>
<path d="M589 240V405M602 240V400M686 240V395M697 240V405"/>
<path d="M387 430A41 16 0 0 1 468 430A41 16 0 0 1 387 430ZM394 440V625M461 440V625M385 632A41 15 0 0 1 468 632A41 15 0 0 1 385 632Z"/>
<path d="M820 628A41 15 0 0 1 901 628A41 15 0 0 1 820 628ZM828 640V820M893 640V820M818 832A42 15 0 0 1 902 832A42 15 0 0 1 818 832Z"/>
<path d="M272 510Q290 466 345 466Q396 468 396 486Q378 505 380 545Q340 530 290 555L272 570M272 510V620Q290 638 325 637T380 620V545M321 567V637M396 490V560L380 590M345 468V540M290 555Q340 580 396 550"/>
<path d="M1016 512V610Q1005 625 998 635V580M906 510Q930 488 975 490T1016 512M906 510V560L893 570V645Q910 662 950 662T998 640M940 590V662M967 490V560M906 560Q950 600 1016 560"/>
<path d="M478 645Q490 618 555 622T700 628Q747 630 747 650Q740 670 700 666T540 668Q480 664 478 645ZM478 715Q480 695 540 695T700 698Q747 700 747 718Q740 740 700 738T540 735Q480 730 478 715M550 622V695M684 630V700M700 668V738M514 662V735"/>
<path d="M131 697A513 191 0 0 1 1157 697A513 193 0 0 1 302 842M302 842Q306 834 320 838M131 697Q140 745 200 785L215 790M154 697A490 182 0 0 1 1133 697A489 184 0 0 1 330 838M154 697Q158 740 210 785"/>
<path d="M199 790V1725M217 785V1720M301 838V1775M320 842V1775M199 790 217 785M302 842 320 842"/>
<path d="M510 735V875"/>
</g>
<g class="edge thread"><path d="M589 120A55 12 0 0 0 698 120M589 138A55 12 0 0 0 698 138M589 156A55 12 0 0 0 698 156M589 174A55 12 0 0 0 698 174M589 192A55 12 0 0 0 698 192M589 210A55 12 0 0 0 698 210"/></g>
<path d="M589 100A55 15 0 0 1 699 100A55 15 0 0 1 589 100ZM589 230A55 16 0 0 0 699 230M589 100V235M699 100V235" class="edge"/>
<path d="M778 1930V2020Q782 2045 800 2048Q900 2040 1040 1985L1076 1945V1820Q930 1880 800 1898Q780 1900 778 1930Z" fill="#8c9799"/>
<path d="M778 1925Q900 1890 983 1860V1895Q975 1920 960 1928L790 1978H778Z" fill="url(#pocket)"/>
<path d="M983 1860 1076 1822V1930L1060 1970 983 1925Z" fill="url(#pocket)"/>
<path d="M790 1978 965 1927 1062 1970Q1030 1995 960 2010L840 2040Z" fill="#ced6d8"/>
<path d="M836 2302 925 2279V2443L842 2467Z" fill="#8e999b"/>
<g class="edge">
<ellipse cx="643" cy="1632" rx="513" ry="193"/><path d="M301 1775A489 184 0 0 0 1133 1632A489 184 0 0 0 154 1632Q160 1680 199 1720"/>
<path d="M154 1690V2180M1131 1690V2180" opacity=".4"/><path d="M777 1455V2005M510 1810V2355"/>
<path d="M131 697V1632M1157 697V1632" opacity=".4"/>
<path d="M210 1780V1670Q212 1640 235 1625Q340 1565 485 1550Q508 1555 510 1590V1675Q505 1700 485 1704Q340 1725 225 1782Q212 1782 210 1770"/>
<path d="M302 1810V1710Q305 1680 330 1672L580 1598Q600 1600 602 1620V1720Q598 1745 575 1752L330 1827Q305 1825 302 1810M225 1625 320 1674M212 1665 302 1703M485 1550 600 1602M510 1568 600 1612M510 1675 602 1715M485 1704 575 1752M215 1765 302 1812M225 1782 320 1827"/>
<path d="M778 2020V1930Q780 1900 800 1898Q930 1885 1060 1820Q1076 1815 1076 1835V1935Q1074 1960 1060 1972Q960 2030 800 2048Q780 2045 778 2020M684 1990V1885Q686 1855 710 1850L965 1778Q983 1780 983 1800V1895Q980 1920 960 1928L710 2000Q686 2005 684 1990M710 1850 800 1898M684 1880 778 1924M970 1778 1070 1820M983 1785 1076 1840M983 1895 1076 1938M960 1928 1062 1970M684 1985 778 2030M710 2000 800 2048"/>
<ellipse cx="643" cy="2181" rx="489" ry="183"/><ellipse cx="643" cy="2178" rx="466" ry="168"/>
<path d="M605 2040Q850 2055 980 2130Q1025 2180 990 2218L1065 2254M1065 2254Q1110 2200 1105 2150M220 2098 290 2134Q255 2180 310 2230Q440 2310 680 2312L754 2350M532 2008 605 2040M585 2035 378 2104M290 2134 378 2112V2104M1003 2232 700 2320M220 2098Q175 2140 178 2180"/>
<path d="M295 2130Q265 2190 330 2235Q450 2300 680 2315M605 2045Q850 2060 975 2130Q1020 2180 1000 2215M225 2105 290 2140M535 2015 600 2045M995 2222 1062 2260M700 2325 750 2352"/>
<ellipse cx="643" cy="2180" rx="177" ry="67"/><ellipse cx="643" cy="2205" rx="177" ry="62"/><ellipse cx="643" cy="2215" rx="150" ry="62"/><ellipse cx="643" cy="2235" rx="128" ry="52"/><ellipse cx="643" cy="2255" rx="102" ry="32"/>
<ellipse cx="643" cy="2260" rx="43" ry="17"/><path d="M600 2262V2300Q605 2328 643 2328T686 2300V2262M595 2250V2280M600 2290H686M692 2115V2145M530 2155Q535 2180 545 2190"/>
<path d="M359 2090 443 2060 448 2065V2225L370 2247 359 2240ZM367 2090V2245M367 2090 448 2067M359 2238 440 2218M430 2100V2230"/>
<ellipse cx="450" cy="2112" rx="35" ry="13"/><path d="M472 2120V2245M440 2125V2235M418 2238Q430 2255 475 2248"/>
<ellipse cx="834" cy="1995" rx="35" ry="12"/><ellipse cx="834" cy="2120" rx="35" ry="13"/><path d="M812 2005V2125M857 2005V2128"/>
<path d="M836 2302 918 2278 925 2282V2443L842 2467 836 2463ZM845 2302V2466M845 2302 925 2282M836 2460 918 2438V2280"/>
</g>
</svg>
<svg class="triad" viewBox="0 0 120 130" role="img" aria-label="坐标系"><path d="M10 66 40 52 70 68V107L37 117 10 105Z" fill="#fff" stroke="#aaa"/><path d="M10 66 37 78 70 68M37 78V117" fill="none" stroke="#aaa"/><path d="M38 36H42V67H38Z" fill="#0c36c8"/><path d="M40 20 45 38H35Z" fill="#0c36c8"/><path d="M70 78 86 72" stroke="#2f9a30" stroke-width="5"/><path d="M97 69 84 78 81 70Z" fill="#2f9a30"/><path d="M52 92 74 105" stroke="#c8262a" stroke-width="5"/><path d="M86 108 71 107 76 99Z" fill="#c8262a"/><text x="36" y="14" fill="#3a50e8">Z</text><text x="101" y="71" fill="#3f9c40">Y</text><text x="88" y="115" fill="#d02a2a">X</text></svg>
</div>
</section>

<aside class="dock">
<button aria-label="实体"><svg class="i36"><use href="#solid"/></svg></button>
<button aria-label="部件"><svg class="i32"><use href="#bracket"/></svg></button>
<button aria-label="编辑草图"><svg class="i32" viewBox="0 0 32 32"><path d="M6 2V27H26M1 16Q10 2 29 1" fill="none" stroke="#12a8d0" stroke-width="1.500"/><circle cx="17" cy="15" r="7" fill="none" stroke="#12a8d0" stroke-width="1.500"/><use href="#wrench" x="12" y="12" width="20" height="20"/></svg></button>
<button aria-label="隐藏"><svg class="i32"><use href="#eyeoff"/></svg></button>
<button aria-label="拉伸"><svg class="i32"><use href="#extrude"/></svg></button>
<button aria-label="块"><svg class="i32"><use href="#cube"/></svg></button>
<button aria-label="收藏"><svg class="i32" viewBox="0 0 32 32"><path d="M21 12 24 18 31 18 26 23 28 29 21 26 15 29 17 23 12 18 18 18Z" fill="#fde04a" stroke="#d8a818"/><path d="M3 13H14M1 18H9M3 20H10M1 25H13M3 29H13" stroke="#4fa0e0" stroke-width="1.500"/><path d="M9 9 17 6 22 3 25 9 20 13 15 12Z" fill="#f8c898" stroke="#a06030"/><path d="M22 2 28 1 28 8 25 9Z" fill="#2a3cc0"/></svg></button>
<button aria-label="视图坐标"><svg class="i32" viewBox="0 0 32 32"><path d="M2 1V19" stroke="#2a8ac8" stroke-width="1.500"/><path d="M2 19 17 10" stroke="#1eb428" stroke-width="1.500"/><path d="M2 19 15 27" stroke="#e02030" stroke-width="1.500"/><path d="M12 24Q22 11 32 24Q22 36 12 24Z" fill="#fff" stroke="#333" stroke-width="1.300"/><circle cx="22" cy="24" r="4" fill="#333"/></svg></button>
<button aria-label="边倒圆"><svg class="i32"><use href="#blend"/></svg></button>
<button aria-label="帮助"><svg class="i32" viewBox="0 0 32 32"><circle cx="16" cy="16" r="15" fill="#fff" stroke="#444" stroke-width="1.500"/><path d="M11 12Q11 7 16 7T21 12Q21 14 16 18V22M16 24V26" fill="none" stroke="#444" stroke-width="1.500"/></svg></button>
<hr>
</aside>
</main>

<footer class="status"><strong>选择对象并使用 MB3，或者双击某一对象</strong><svg class="i24"><use href="#bell"/></svg></footer>

<footer class="taskbar">
<button class="weather"><span class="bolt"><svg viewBox="0 0 20 36"><path d="M10 1H19L14 12H18L11 20H14L1 36 6 22H1Z" fill="#e8dc10"/></svg><em>1</em></span><span class="wtext">雷电预警<small>已启动</small></span></button>
<div class="apps">
<button aria-label="开始"><svg class="i36" viewBox="0 0 36 36"><path d="M0 0H17V17H0ZM18 0H35V17H18ZM0 18H17V35H0ZM18 18H35V35H18Z" fill="url(#win)"/></svg></button>
<label class="pill"><svg class="i24" viewBox="0 0 24 24"><circle cx="10" cy="10" r="8" fill="none" stroke="#222" stroke-width="2.200"/><path d="M16 16 22 22" stroke="#222" stroke-width="3"/></svg><input type="text" placeholder="搜索" aria-label="任务栏搜索"><svg class="ice" viewBox="0 0 42 36"><path d="M1 18H27L22 28Q18 31 20 35H8Q10 31 6 28Z" fill="url(#cup)"/><path d="M2 17Q0 12 7 11Q3 8 10 6Q12 0 15 1Q21 5 20 8Q25 11 22 13Q28 15 26 18Q14 23 2 17Z" fill="#f08aa6"/><path d="M6 13Q14 17 22 12M9 8Q14 11 19 7" fill="none" stroke="#c8506e" stroke-width="2"/><path d="M1 17Q14 22 27 17V20Q14 25 1 20Z" fill="#f6dcae"/><circle cx="7" cy="8" r="3" fill="#c8202a"/><path d="M37 18Q32 22 31 29M37 18Q41 24 39 29" fill="none" stroke="#7a4a30"/><circle cx="31" cy="31" r="4" fill="#d8323a"/><circle cx="38" cy="32" r="4" fill="#d8323a"/></svg></label>
<button aria-label="任务视图"><svg class="i36" viewBox="0 0 36 36"><path d="M0 10H26V34H0Z" fill="#2c2c2c"/><path d="M10 1H35V24H10Z" fill="#fff" fill-opacity=".75" stroke="#ccc"/></svg></button>
<button aria-label="资源管理器"><svg class="i36" viewBox="0 0 36 36"><path d="M0 3Q0 1 2 1H12L15 5V12H0Z" fill="#e0a010"/><path d="M0 7H12L16 4H36V34H0Z" fill="#fdcb3a"/><path d="M6 34V26Q7 23 10 23H26Q29 23 30 26V34Z" fill="#1278d2"/><path d="M11 29H25" stroke="#0a4a9a" stroke-width="2"/></svg></button>
<button class="run" aria-label="Edge"><svg class="i36" viewBox="0 0 36 36"><path d="M1 17Q2 0 18 0T36 16Q35 25 25 25Q20 24 23 19Q23 11 14 11Q4 11 1 17Z" fill="url(#edge)"/><path d="M0 18Q2 10 12 10Q22 11 22 17Q16 14 15 21Q16 30 26 29Q32 28 33 27Q28 36 18 36Q1 35 0 18Z" fill="#1183d8"/><path d="M15 17Q8 26 18 35Q28 36 33 27Q26 31 19 27Q15 23 15 17Z" fill="#0e4f9c"/></svg></button>
<button aria-label="应用商店"><svg class="i36" viewBox="0 0 36 36"><path d="M9 7V2Q9 1 10 1H26Q27 1 27 2V7" fill="none" stroke="#35b0f0" stroke-width="3"/><path d="M1 5H35V31Q34 36 30 36H6Q1 35 1 31Z" fill="#164f8e"/><path d="M10 13H17V20H10Z" fill="#f25022"/><path d="M19 13H26V20H19Z" fill="#7fba00"/><path d="M10 22H17V29H10Z" fill="#00a4ef"/><path d="M19 22H26V29H19Z" fill="#ffb900"/></svg></button>
<button aria-label="Designcenter"><svg class="i36" viewBox="0 0 36 36"><path d="M0 0H36V36H0Z" fill="url(#pen)"/><path d="M18 4 25 8 11 22V27L6 24V11ZM30 11V24L18 32 12 28 25 14V9Z" fill="#fff"/></svg></button>
<button class="run" aria-label="bilibili"><svg class="i36" viewBox="0 0 36 36"><rect width="36" height="36" rx="8" fill="#fd4d86"/><rect x="7" y="9" width="22" height="20" rx="4" fill="none" stroke="#ff8fb4" stroke-width="2"/><path d="M12 4 15 9M24 4 21 9" stroke="#ff8fb4" stroke-width="2"/><path d="M4 12V24H8V18H4M11 16V24M14 12V24M17 16V24M20 12V24H24V18H20M27 16V24M30 12V24M33 16V24" fill="none" stroke="#fff" stroke-width="1.800"/></svg></button>
<button class="active" aria-label="NX"><svg class="i36" viewBox="0 0 36 36"><path d="M0 4H31V36H0Z" fill="#0a9a92"/><path d="M4 0H36V31H4Z" fill="#8c120c"/><text x="20" y="22" class="nxt">NX</text></svg></button>
<button class="run" aria-label="QQ"><svg class="i36" viewBox="0 0 36 36"><rect width="36" height="36" rx="8" fill="#fff"/><path d="M10 13Q10 4 18 4T26 13L30 22V27L26 24Q25 31 18 31T10 24L6 27V22Z" fill="#111"/><path d="M12 20Q18 24 24 20Q27 30 18 30T12 20Z" fill="#fff"/><ellipse cx="15.500" cy="10" rx="1.700" ry="2.500" fill="#fff"/><ellipse cx="20.500" cy="10" rx="1.700" ry="2.500" fill="#fff"/><path d="M13 14Q18 13 23 14Q18 18 13 14ZM9 32Q13 28 17 32ZM19 32Q23 28 27 32Z" fill="#f7a81c"/><path d="M9 16Q18 22 27 16V20Q18 25 14 22V27H11V21Z" fill="#e52020"/></svg></button>
</div>
<div class="tray">
<button aria-label="隐藏的图标"><svg class="i24" viewBox="0 0 24 24"><path d="M4 16 12 8 20 16" fill="none" stroke="#222" stroke-width="2"/></svg></button>
<button aria-label="更新"><svg class="i24" viewBox="0 0 24 24"><path d="M1 11Q2 1 12 1Q19 1 22 8M23 2V9H16M8 16H1V23M2 17Q5 23 12 23" fill="none" stroke="#222" stroke-width="1.500"/><circle cx="18" cy="18" r="6" fill="#f90"/></svg></button>
<button aria-label="云盘"><svg class="i24" viewBox="0 0 24 24"><path d="M5 20Q0 19 1 14Q2 10 6 10Q8 4 13 5Q17 5 19 10Q24 11 23 16Q22 20 18 20Z" fill="#999" stroke="#222" stroke-width="1.500"/><path d="M5 4 23 22" stroke="#f5e6e4" stroke-width="2"/><path d="M3 4 21 22" stroke="#222" stroke-width="1.500"/></svg></button>
<button class="ying">英</button>
<button aria-label="搜狗"><svg class="i26" viewBox="0 0 26 26"><path d="M1 3 20 0 26 21 22 25 5 26Z" fill="#f5531c"/><path d="M20 6Q7 4 8 10T18 15Q19 20 7 19" fill="none" stroke="#fff" stroke-width="4"/></svg></button>
<button class="net" aria-label="网络、音量和电池"><svg class="i24" viewBox="0 0 24 24"><path d="M1 9Q12-1 23 9M4 13Q12 5 20 13M8 17Q12 12 16 17" fill="none" stroke="#222" stroke-width="2"/><circle cx="12" cy="20" r="2" fill="#222"/></svg><svg class="i24" viewBox="0 0 24 24"><path d="M1 9H5L10 4V20L5 15H1ZM13 9Q15 12 13 15" fill="none" stroke="#222" stroke-width="1.700"/><path d="M16 6Q20 12 16 18M19 4Q25 12 19 20" fill="none" stroke="#bbb" stroke-width="1.500"/></svg><svg class="i24" viewBox="0 0 24 24"><path d="M8 5H21V19H2V11" fill="none" stroke="#222" stroke-width="2"/><path d="M10 8H18V16H5V14ZM22 9H24V15H22ZM5 0 1 8H4L3 13 8 5H5Z" fill="#222"/></svg></button>
<button class="clock">9:03<br>2025/7/12</button>
</div>
</footer>
<div class="ime"><svg class="i28" viewBox="0 0 28 28"><path d="M24 4Q5 2 5 8Q5 12 15 13Q24 14 23 19Q20 26 4 23" fill="none" stroke="#f07820" stroke-width="6"/></svg><i></i><b>英</b></div>
<div class="mark">UG<span>爱好者论坛</span> WWW.UGSNX.COM</div>
</body>
</html>
```
FILE: styles.css
```css
*{box-sizing:border-box}
body{margin:0;min-height:100vh;display:flex;flex-direction:column;position:relative;background:#fff;color:#1c1c1c;font:17px/24px "Noto Sans","Noto Sans CJK SC",sans-serif}
button{appearance:none;border:0;background:none;padding:0;margin:0;font:inherit;color:inherit;display:flex;align-items:center;justify-content:center;flex:none}
a{color:inherit;text-decoration:none}
svg{flex:none;display:block;overflow:visible}
.defs{position:absolute;width:0;height:0}
.i10{width:10px;height:10px}.i14{width:14px;height:14px}.i16{width:16px;height:16px}.i20{width:20px;height:20px}
.i24{width:24px;height:24px}.i26{width:26px;height:26px}.i28{width:28px;height:28px}.i32{width:32px;height:32px}.i36{width:36px;height:36px}.i48{width:48px;height:48px}
.c14{width:14px}.c18{width:18px}.c20{width:20px}.c24{width:24px}.c34{width:34px}.c38{width:38px}.c42{width:42px}
.wl{fill:none;stroke:currentColor;stroke-width:1.4}
.wl2{fill:none;stroke:currentColor;stroke-width:2}
.caret{width:8px;height:5px;background:currentColor;clip-path:polygon(0 0,100% 0,50% 100%)}
.caret.lg{width:12px;height:7px}

.app-header{height:79px;color:#fff;background:linear-gradient(90deg,#006187,#006c93 30%,#0479a5)}
.titlebar{height:36px;display:grid;grid-template-columns:auto 1fr auto;align-items:center}
.quick{display:flex;height:36px;align-items:center}
.quick .sep{width:1px;height:28px;background:#00506f;flex:none}
.nx{width:49px;padding-left:4px;font:bold 27px/36px "Open Sans","Noto Sans",sans-serif}
.dim{opacity:.22}
.winbtn{gap:4px;margin-left:4px}
.winbtn .caret{margin-left:4px}
.over{margin-left:4px}
.over .caret{width:10px;height:9px;clip-path:polygon(0 0,100% 0,100% 15%,0 15%,0 40%,100% 40%,50% 100%,0 40%)}
h1{margin:0;padding-left:797px;font-size:18px;font-weight:400}
.wintools{display:flex;align-items:center;padding-right:12px}
.wintools strong{font:bold 17px/24px "Noto Sans","Open Sans",sans-serif;margin-right:20px}
.wintools button{width:36px;height:24px}
.wintools button:last-child{width:26px;justify-content:flex-end}
.menubar{height:43px;display:flex;font-size:20px;line-height:41px}
.menubar a{padding:0 16px;height:41px}
.menubar .file{padding:0 6px 0 22px;margin-right:22px}
.menubar .on{color:#ffd24a;border-bottom:2px solid #ffc83c}
.menuright{margin-left:auto;display:flex;align-items:center;padding-right:1px;height:43px}
.menuright button{width:38px;height:28px}
.findbox{width:261px;height:28px;background:#fff;border:1px solid #777;display:flex;align-items:center;padding-right:2px;margin-right:8px}
.findbox input{flex:1;min-width:0;border:0;padding:0;background:none;font:inherit;font-size:17px;line-height:24px;outline:0;appearance:none}
.findbox input::placeholder{color:#aaa;opacity:1}

.ribbon{height:133px;display:flex;border-bottom:1px solid #d8d8d8}
.group{position:relative;display:flex;flex-direction:column;padding-top:5px}
.group::after{content:"";position:absolute;right:0;top:5px;bottom:5px;width:1px;background:#d8d8d8}
.g1{width:157px;padding-left:10px}.g2{width:1193px;padding-left:8px}.g3{width:516px;padding-left:14px}.g4{width:570px;padding-left:11px}
.tools{display:flex;height:102px;align-items:flex-start;white-space:nowrap}
.big{flex-direction:column;height:94px;justify-content:flex-start}
.big svg{margin-bottom:5px}
.big .caret{margin-top:6px}
.w2{width:60px}.w3{width:62px}.w4{width:78px}.w5{width:96px}
.small{gap:4px;justify-content:flex-start}
.pair{display:flex;flex-direction:column;gap:18px;padding-top:8px;margin-left:9px;width:75px;align-items:flex-start}
.pair+.pair{width:auto}
.pair+.big{margin-left:5px}
.g2 .pair+.pair{width:106px}
.trio{display:flex;flex-direction:column;gap:9px;padding-top:2px;margin:0 11px 0 9px;align-items:flex-start}
.g3 .pair{margin-left:0;width:82px}
.g3 .pair+.pair{width:99px}
.g3 .pair+.pair+.pair{width:90px}
.g3 .pair+.big{margin-left:8px}
.g3 .big+.pair{margin-left:11px;width:140px}
.big.tall{width:84px;padding-top:10px;height:auto}
.gauge{width:48px;height:48px}
.big.tall .gauge{margin-bottom:6px}
.pair.wide{gap:25px;padding-top:17px;margin-left:12px;width:133px}
.csys{margin-top:16px}
.trio.text{margin:0 0 0 13px}
.gfoot{display:flex;height:24px;align-items:center;color:#00648c;margin-left:-8px}
.g2 .gfoot{margin-left:-6px}
.gfoot span{flex:1;text-align:center}
.gfoot button{width:28px;height:20px;color:#1c1c1c}
.ribbonend{margin-left:auto;display:flex;align-items:flex-end;padding-bottom:3px}
.ribbonend button{width:24px;height:20px}

.selbar{height:36px;display:flex;align-items:center;border-bottom:1px solid #a8a8a8}
.selbar .sep{width:1px;height:28px;background:#d8d8d8;flex:none}
.menubtn{width:125px;padding-left:7px;gap:7px}
.combo{position:relative;height:29px}
.combo.a{width:226px;margin-left:14px}
.combo.b{width:236px}
.combo select{appearance:none;width:100%;height:29px;border:1px solid #6e6e6e;border-radius:0;background:#fff;font:inherit;color:#1c1c1c;padding:0 0 2px 3px}
.combo .caret{position:absolute;right:6px;top:12px}
.funnel{width:48px}
.strip{display:flex;align-items:center;margin-left:7px}
.t{width:32px;height:32px;margin:0 2px;color:#333}
.t.on{background:#cde6eb}
.t.faint{color:#b9b9b9}
.strip .sep{margin:0 7px}
.iso{gap:4px;margin:0 2px 0 3px}
.end{margin-left:auto;height:24px;padding-top:10px}

.main{flex:1;display:flex;min-height:0}
.rail{width:45px;background:#dcdcdc;border-right:1px solid #a8a8a8;display:flex;flex-direction:column}
.rail button{height:58px;width:44px;padding:2px 0 0 3px}
.rail .first{height:39px;padding:0}
.rail .on{width:42px;margin-left:3px;padding:0;background:#fff;border:1px solid #a8a8a8;border-right:0}
.nav{width:393px;border-right:1px solid #a8a8a8;padding:0 12px 0 8px}
.nav h2{display:flex;align-items:center;gap:4px;height:35px;margin:0;padding:0 3px 2px 0;font-size:18px;font-weight:400;color:#000}
.nav h2 .i24{margin-left:-2px}
.nav h2 button{margin-left:auto}
.square{width:13px;height:12px;border:2px solid #000;border-left-width:1px;border-right-width:1px}
.tree{position:relative;border:1px solid #ccc;height:1065px;background:#efefef}
.tree table{width:343px;table-layout:fixed;border-collapse:collapse;font-size:18px}
.tree col{width:300px}.tree .k1{width:32px}.tree .k2{width:11px}
.tree th{height:28px;padding:0 0 0 6px;text-align:left;font-weight:400;background:#efefef;border-right:1px solid #ccc;border-bottom:1px solid #ccc;line-height:26px;white-space:nowrap;overflow:visible}
.tree th:last-child{border-right:0}
.sortup{display:inline-block;width:13px;height:7px;margin:0 0 3px 19px;background:#111;clip-path:polygon(50% 0,100% 100%,0 100%)}
.tree td{height:28px;padding:0;border-right:1px solid #e6e6e6;border-bottom:1px solid #e6e6e6;background:#fff;color:#999;line-height:26px;overflow:hidden}
.tree tr:nth-child(even) td{background:#f9f9f9}
.tree td:last-child{border-right:0}
.node{display:flex;align-items:center;height:27px;margin-left:36px;border-left:1px dotted #888}
.node::before{content:"";width:10px;border-top:1px dotted #888;margin-right:1px}
.node .ev{width:24px;height:24px}
.node .fe{width:26px;height:26px;margin-right:2px}
.mk{width:4px;height:6px;margin:6px 0 0 6px}
.vbar{position:absolute;right:0;top:29px;bottom:26px;width:25px;background:#efefef}
.vbar i{display:block;width:5px;height:663px;margin:135px 0 0 10px;border-radius:3px;background:#858585}
.hbar{padding:12px 0 0 27px}
.hbar i{display:block;width:191px;height:5px;border-radius:3px;background:#858585}
.splitter{height:10px;margin-top:3px;background:#dcdcdc;border:1px solid #aaa}
.acc{width:100%;height:32px;border-bottom:2px solid #d0d0d0;justify-content:flex-start;gap:12px;padding:3px 0 0 14px;font-size:21px;color:#00648c}
.splitter+.acc{height:34px}
.acc b{width:7px;height:14px;background:#00648c;clip-path:polygon(0 0,100% 50%,0 100%)}

.work{flex:1;min-width:0;display:flex;flex-direction:column}
.tabs{height:34px;display:flex;border-bottom:2px solid #005f87;font-size:18px}
.tab{display:flex;align-items:center;gap:5px;padding:0 6px;color:#111}
.tab.on{width:184px;background:#005f87;color:#fff}
.iclip{width:17px;height:22px;margin-left:2px}
.tab .i10{margin-left:7px}
.canvas{flex:1;position:relative;background:#fff;overflow:hidden}
.motor{position:absolute;left:692px;top:138px;width:420px;height:840px}
.edge{fill:none;stroke:#2c3234;stroke-width:2.6}
.thread{stroke-width:9}
.triad{position:absolute;left:67px;top:1019px;width:120px;height:130px;font-size:13px}
.dock{width:47px;display:flex;flex-direction:column;align-items:center;padding:10px 1px 0 0;position:relative}
.dock::before{content:"";position:absolute;left:0;top:34px;bottom:0;width:1px;background:#d8d8d8}
.dock button{height:42px;width:46px}
.dock hr{width:38px;margin:6px 0;border:0;border-top:1px solid #d8d8d8}

.status{height:30px;border-top:1px solid #a0a0a0;display:flex;align-items:center;padding:0 111px 0 4px}
.status svg{margin-left:auto}

.taskbar{height:72px;border-top:2px solid #c4b8b8;display:grid;grid-template-columns:1fr auto 1fr;align-items:center;background:linear-gradient(90deg,#fae6e4,#f7e6e6 22%,#fbeae4 40%,#f6e4e6 60%,#f7e8e2 76%,#f3ebdf 82%,#f9e5e4 90%,#f4e4ec)}
.weather{justify-self:start;padding-left:34px;font-size:18px;line-height:25px;text-align:left}
.bolt{position:relative;width:42px;height:50px}
.bolt svg{width:20px;height:36px;margin-top:8px}
.bolt em{position:absolute;left:11px;top:0;width:24px;height:24px;border-radius:12px;background:#c42b1c;color:#fff;font-style:normal;font-size:17px;line-height:24px;text-align:center}
.wtext small{display:block;font-size:18px;color:#5e5656}
.apps{display:flex;align-items:center;padding-left:6px}
.apps button{width:66px;height:58px;position:relative}
.apps button:first-child{width:56px;margin-right:10px}
.run::after,.active::after{content:"";position:absolute;bottom:1px;left:29px;width:8px;height:5px;border-radius:3px;background:#8a8484}
.apps .active{width:56px;margin:0 5px;background:#fdf4f2;border-radius:6px;box-shadow:0 0 2px #d8c4c2}
.apps .active::after{left:16px;width:24px;background:#0078d4}
.pill{width:326px;height:46px;border-radius:23px;background:#fdf6f5;border:1px solid #dccbca;border-bottom:2px solid #cbbab9;display:flex;align-items:center;padding:0 14px 0 16px;gap:14px;margin-right:5px}
.pill input{flex:1;min-width:0;border:0;background:none;padding:0;font:inherit;font-size:21px;outline:0}
.pill input::placeholder{color:#555;opacity:1}
.ice{width:42px;height:36px}
.nxt{font:bold 15px "Noto Sans",sans-serif;fill:#fff;text-anchor:middle}
.tray{justify-self:end;display:flex;align-items:center;padding-right:30px}
.tray button{width:48px;height:48px}
.tray .ying{font-size:25px;color:#fff;-webkit-text-stroke:1px #555;width:48px}
.tray .ying+button{width:66px}
.tray .net{width:128px;gap:12px}
.tray .clock{width:86px;font-size:18px;line-height:25px;text-align:right;justify-content:flex-end}
.ime{position:absolute;right:4px;bottom:75px;width:107px;height:45px;background:#fff;border-radius:10px;box-shadow:0 1px 6px rgba(0,0,0,.3);display:flex;align-items:center;padding:0 13px;gap:13px}
.ime i{width:1px;height:28px;background:#ccc}
.ime b{font-size:22px;font-weight:500}
.mark{position:absolute;right:5px;bottom:2px;font:13px/20px "Liberation Mono","Noto Sans CJK SC",monospace;color:#666;text-shadow:1px 1px 0 #fff,-1px 0 0 #fff;white-space:pre}
.mark span{font-size:16px}
```
FILE: app.js
```js
// Fill the part navigator with the hidden body nodes.
const FIRST_BODY = 6;
const LAST_BODY = 41;
const rows = [];
for (let n = FIRST_BODY; n <= LAST_BODY; n++) {
  rows.push(`<tr><td><div class="node">
    <svg class="ev"><use href="#eyeoff"/></svg>
    <svg class="fe" viewBox="0 0 32 32"><use href="#feature" x="4" y="4" width="27" height="27"/><circle cx="8" cy="8" r="6" fill="#fff" stroke="#111" stroke-width="3"/><path d="M4 12 12 4" stroke="#111" stroke-width="3"/></svg>
    <span>体 (${n})</span></div></td><td></td>
    <td><svg class="mk" viewBox="0 0 4 6"><path d="M0 1 4 5" stroke="#1fd82f" stroke-width="2"/></svg></td></tr>`);
}
document.getElementById('bodies').innerHTML = rows.join('');
```
